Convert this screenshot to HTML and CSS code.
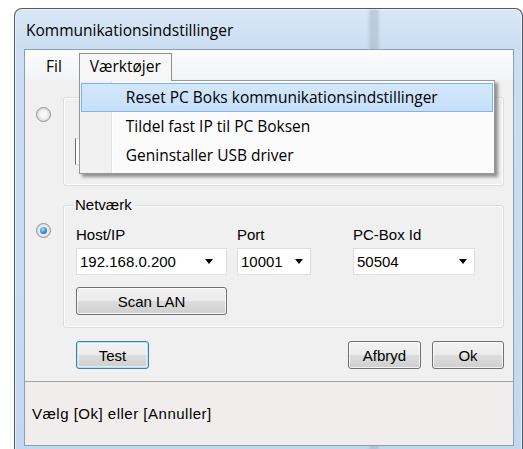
FILE: index.html
```html
<!DOCTYPE html>
<html lang="da">
<head>
<meta charset="utf-8">
<title>Kommunikationsindstillinger</title>
<link rel="stylesheet" href="styles.css">
</head>
<body>
<div class="window">
  <div class="titlebar">Kommunikationsindstillinger</div>
  <div class="client">
    <nav class="menubar">
      <span class="menu-item">Fil</span>
      <span class="menu-item open">Værktøjer
        <div class="dropdown">
          <div class="dd-item active">Reset PC Boks kommunikationsindstillinger</div>
          <div class="dd-item">Tildel fast IP til PC Boksen</div>
          <div class="dd-item">Geninstaller USB driver</div>
        </div>
      </span>
    </nav>

    <div class="main">
      <div class="conn-row">
        <span class="radio"></span>
        <div class="group group-usb">
          <div class="combo combo-port"></div>
        </div>
      </div>

      <div class="conn-row row-net">
        <span class="radio checked"></span>
        <fieldset class="group">
          <legend>Netværk</legend>
          <div class="fields">
            <div class="field f-host">
              <span class="lbl">Host/IP</span>
              <div class="combo"><span class="val">192.168.0.200</span><i class="arrow"></i></div>
            </div>
            <div class="field f-port">
              <span class="lbl">Port</span>
              <div class="combo"><span class="val">10001</span><i class="arrow"></i></div>
            </div>
            <div class="field f-box">
              <span class="lbl">PC-Box Id</span>
              <div class="combo"><span class="val">50504</span><i class="arrow"></i></div>
            </div>
          </div>
          <button class="btn btn-scan">Scan LAN</button>
        </fieldset>
      </div>

      <div class="actions">
        <button class="btn btn-test default">Test</button>
        <button class="btn btn-cancel">Afbryd</button>
        <button class="btn btn-ok">Ok</button>
      </div>
    </div>

    <div class="status">Vælg [Ok] eller [Annuller]</div>
  </div>
</div>
</body>
</html>
```

FILE: styles.css
```css
* { box-sizing: border-box; }

html, body { margin: 0; }

body {
  width: 523px;
  height: 449px;
  overflow: hidden;
  background: #ffffff;
  font-family: "Open Sans", "Noto Sans", sans-serif;
  color: #000;
}

/* Aero window frame */
.window {
  margin: 8px 0 0 14px;
  width: 509px;
  height: 442px;
  border: 1px solid #4f5864;
  border-bottom: none;
  border-radius: 8px 8px 0 0;
  background:
    linear-gradient(to right, rgba(255,255,255,0) 352px, rgba(160,174,190,.45) 356px, rgba(160,174,190,.45) 362px, rgba(255,255,255,0) 366px),
    linear-gradient(#dae7f6, #cbdef3 40px, #c3d8ef);
  box-shadow: inset 0 0 0 1px rgba(255,255,255,.55);
  display: flex;
  flex-direction: column;
}

.titlebar {
  height: 40px;
  padding: 12px 0 0 11px;
  font-size: 15.5px;
  line-height: 18px;
  color: #000;
}

.client {
  flex: none;
  height: 397px;
  margin: 0 8px 0 9px;
  border: 1px solid #8d9fb3;
  background: #f0f0f0;
  display: flex;
  flex-direction: column;
}

/* Menu strip */
.menubar {
  height: 30px;
  display: flex;
  align-items: flex-end;
  padding-left: 12px;
  background: linear-gradient(#fbfcfd, #f1f3f6);
  font-size: 15.5px;
  position: relative;
  z-index: 5;
}

.menu-item {
  height: 27px;
  line-height: 25px;
  padding: 0 8px;
  border: 1px solid transparent;
  border-bottom: none;
}

.menu-item.open {
  position: relative;
  margin-left: 8px;
  padding: 0 10px 0 10px;
  border-color: #8e8f8f;
  background: #f7f7f7;
}

/* hides the dropdown's top edge under the open tab */
.menu-item.open::after {
  content: "";
  position: absolute;
  left: 0;
  right: 0;
  bottom: -1px;
  height: 1px;
  background: #f4f4f4;
  z-index: 3;
}

.dropdown {
  position: absolute;
  left: -1px;
  top: 100%;
  width: 416px;
  height: 94px;
  padding: 2px 1px;
  border: 1px solid #979797;
  background: linear-gradient(to right, #f1f1f1 0 31px, #e2e3e3 31px 32px, #ffffff 32px 33px, #fbfbfb 33px);
  box-shadow: 3px 3px 3px rgba(0,0,0,.4);
  z-index: 2;
}

.dd-item {
  height: 29px;
  line-height: 27px;
  padding-left: 44px;
  border: 1px solid transparent;
  white-space: nowrap;
}

.dd-item.active {
  border-color: #80b3e8;
  background: linear-gradient(#d3e7fb, #c6e0f9);
}

/* Form area */
.main {
  flex: none;
  padding: 17px 9px 12px 11px;
  font-family: "Liberation Sans", Arial, sans-serif;
  font-size: 15px;
}

.conn-row {
  display: grid;
  grid-template-columns: 27px 1fr;
}

.row-net { margin-top: 10px; }

.radio {
  width: 15px;
  height: 15px;
  margin-top: 10px;
  border: 1px solid #8f9193;
  border-radius: 50%;
  background: radial-gradient(circle at 50% 50%, #f8f8f8 30%, #d9d9d9 75%, #cfcfcf);
  position: relative;
}

.row-net .radio { margin-top: 27px; }

.radio.checked::after {
  content: "";
  position: absolute;
  left: 3px;
  top: 3px;
  width: 7px;
  height: 7px;
  border-radius: 50%;
  background: radial-gradient(circle at 40% 35%, #a8e1ff, #2f8de0 55%, #10508f);
}

.group {
  margin: 0;
  border: 1px solid #d5dfe5;
  border-radius: 3px;
  box-shadow: inset 0 0 0 1px #fbfcfd;
}

.group-usb {
  height: 89px;
  padding: 40px 0 0 11px;
}

fieldset.group {
  padding: 12px 0 12px 12px;
  min-width: 0;
}

legend {
  margin-left: -3px;
  padding: 0 2px;
  line-height: 18px;
}

.fields {
  display: flex;
}

.field {
  display: flex;
  flex-direction: column;
}

.lbl {
  display: block;
  line-height: 17px;
  margin-bottom: 5px;
}

.f-port { margin-left: 10px; }
.f-box { margin-left: 42px; }

.combo {
  height: 27px;
  border: 1px solid #dedede;
  background: #fff;
  display: flex;
  align-items: center;
  padding-left: 3px;
}

.f-host .combo { width: 151px; }
.f-port .combo { width: 74px; }
.f-box .combo { width: 122px; }

.combo-port {
  width: 151px;
  border-left-color: #6a6a6a;
}

.val { flex: 1; white-space: nowrap; }

.arrow {
  width: 0;
  height: 0;
  border-left: 4.5px solid transparent;
  border-right: 4.5px solid transparent;
  border-top: 5px solid #000;
  margin-right: 7px;
}

.f-host .arrow { margin-right: 13px; }

.btn {
  height: 28px;
  padding: 0;
  border: 1px solid #707070;
  border-radius: 3px;
  background: linear-gradient(#f2f2f2, #ebebeb 50%, #dddddd 50%, #cfcfcf);
  box-shadow: inset 0 0 0 1px rgba(255,255,255,.75);
  font-family: "Liberation Sans", Arial, sans-serif;
  font-size: 15px;
  color: #000;
}

.btn-scan {
  display: block;
  width: 151px;
  margin-top: 12px;
}

.btn.default {
  border-color: #3c7fb1;
  box-shadow: inset 0 0 0 1px #aee3f8, inset 0 0 0 2px rgba(255,255,255,.5);
}

.actions {
  display: flex;
  margin-top: 13px;
  padding-left: 40px;
}

.btn-test { width: 73px; }
.btn-cancel { width: 73px; margin-left: auto; }
.btn-ok { width: 72px; margin-left: 11px; }

.status {
  flex: 1;
  border-top: 1px solid #a3a3a3;
  background: #f0edec;
  display: flex;
  align-items: center;
  padding-left: 7px;
  font-family: "Liberation Sans", Arial, sans-serif;
  font-size: 15px;
  letter-spacing: 0.5px;
}
```
